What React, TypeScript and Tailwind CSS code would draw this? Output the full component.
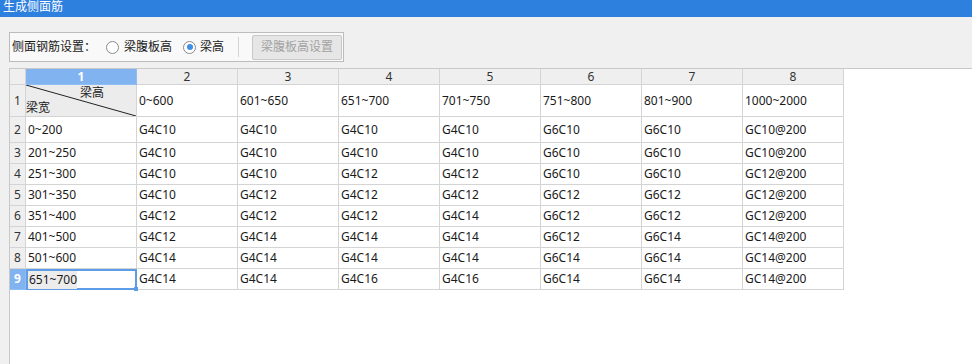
import React from "react";

const font = { fontFamily: '"Noto Sans", "Noto Sans CJK SC", sans-serif' };

const widths = ["w-[111px]", "w-[101px]", "w-[101px]", "w-[101px]", "w-[101px]", "w-[101px]", "w-[101px]", "w-[101px]"];

const heads = ["0~600", "601~650", "651~700", "701~750", "751~800", "801~900", "1000~2000"];

const rows: string[][] = [
  ["0~200", "G4C10", "G4C10", "G4C10", "G4C10", "G6C10", "G6C10", "GC10@200"],
  ["201~250", "G4C10", "G4C10", "G4C10", "G4C10", "G6C10", "G6C10", "GC10@200"],
  ["251~300", "G4C10", "G4C10", "G4C12", "G4C12", "G6C10", "G6C10", "GC12@200"],
  ["301~350", "G4C10", "G4C12", "G4C12", "G4C12", "G6C12", "G6C12", "GC12@200"],
  ["351~400", "G4C12", "G4C12", "G4C12", "G4C14", "G6C12", "G6C12", "GC12@200"],
  ["401~500", "G4C12", "G4C14", "G4C14", "G4C14", "G6C12", "G6C14", "GC14@200"],
  ["501~600", "G4C14", "G4C14", "G4C14", "G4C14", "G6C14", "G6C14", "GC14@200"],
  ["651~700", "G4C14", "G4C14", "G4C16", "G4C16", "G6C14", "G6C14", "GC14@200"],
];

const Radio = ({ checked }: { checked?: boolean }) => (
  <span className="flex h-[13px] w-[13px] shrink-0 items-center justify-center rounded-full border border-[#8a8a8a] bg-white">
    {checked && <span className="h-[6px] w-[6px] rounded-full bg-[#3f8fe8]" />}
  </span>
);

export default function App() {
  return (
    <div className="flex h-[364px] w-[972px] flex-col overflow-hidden bg-[#f0f0f0] text-[12px] text-[#1a1a1a]" style={font}>
      {/* title bar */}
      <div className="h-[17px] shrink-0 overflow-hidden bg-[#2e80df] pl-[3px] leading-[14px] text-white">生成侧面筋</div>

      {/* setting group */}
      <div className="ml-[9px] mt-[15px] flex h-[30px] w-[335px] shrink-0 items-center whitespace-nowrap border border-[#bcbcbc] bg-[#f9f9f9]">
        <span className="ml-[2px] shrink-0">侧面钢筋设置：</span>
        <span className="ml-[10px] flex shrink-0 items-center gap-[5px]">
          <Radio />
          <span>梁腹板高</span>
        </span>
        <span className="ml-[11px] flex shrink-0 items-center gap-[4px]">
          <Radio checked />
          <span>梁高</span>
        </span>
        <span className="ml-[14px] h-[20px] w-px shrink-0 bg-[#d4d4d4]" />
        <button
          disabled
          className="ml-[13px] h-[25px] w-[90px] shrink-0 rounded-[2px] border border-[#c9c9c9] bg-[#e6e6e6] text-[#a2a2a2]"
        >
          梁腹板高设置
        </button>
      </div>

      {/* grid */}
      <div className="ml-[9px] mt-[6px] flex-1 border-l border-t border-[#c8c8c8] bg-white">
        {/* column header */}
        <div className="flex h-[16px] leading-[15px]">
          <div className="w-[16px] border-b border-r border-[#d4d4d4] bg-[#efefef]" />
          {widths.map((w, i) => (
            <div
              key={i}
              className={`${w} border-b border-r text-center ${
                i === 0 ? "border-[#8fbcf2] bg-[#80b3f0] font-bold text-white" : "border-[#d4d4d4] bg-[#efefef] text-[#333]"
              }`}
            >
              {i + 1}
            </div>
          ))}
        </div>

        {/* row 1 */}
        <div className="flex h-[32px]">
          <div className="flex w-[16px] items-center justify-center border-b border-r border-[#d4d4d4] bg-[#efefef] text-[#333]">1</div>
          <div className="relative w-[111px] border-b border-r border-[#d4d4d4] bg-[#ececec]">
            <svg className="absolute inset-0" width="110" height="31">
              <line x1="0" y1="0" x2="110" y2="31" stroke="#222" strokeWidth="1" />
            </svg>
            <span className="absolute left-[54px] top-[1px] leading-[14px]">梁高</span>
            <span className="absolute left-0 top-[16px] leading-[14px]">梁宽</span>
          </div>
          {heads.map((h, i) => (
            <div key={i} className={`${widths[i + 1]} flex items-center border-b border-r border-[#d4d4d4] pl-[2px]`}>
              {h}
            </div>
          ))}
        </div>

        {rows.map((r, ri) => {
          const sel = ri === rows.length - 1;
          return (
            <div key={ri} className={`flex ${ri === 0 ? "h-[26px]" : "h-[21px]"}`}>
              <div
                className={`flex w-[16px] items-center justify-center border-b border-r ${
                  sel ? "border-[#8fbcf2] bg-[#80b3f0] font-bold text-white" : "border-[#d4d4d4] bg-[#efefef] text-[#333]"
                }`}
              >
                {ri + 2}
              </div>
              {r.map((c, ci) =>
                sel && ci === 0 ? (
                  <div key={ci} className={`${widths[ci]} relative flex items-center border-2 border-[#5d9ce6]`}>
                    <span className="bg-[#ececec] pl-px">{c}</span>
                    <span className="absolute -bottom-[3px] -right-[3px] h-[4px] w-[4px] bg-[#5d9ce6]" />
                  </div>
                ) : (
                  <div key={ci} className={`${widths[ci]} flex items-center border-b border-r border-[#d4d4d4] pl-[2px]`}>
                    {c}
                  </div>
                )
              )}
            </div>
          );
        })}
      </div>
    </div>
  );
}
